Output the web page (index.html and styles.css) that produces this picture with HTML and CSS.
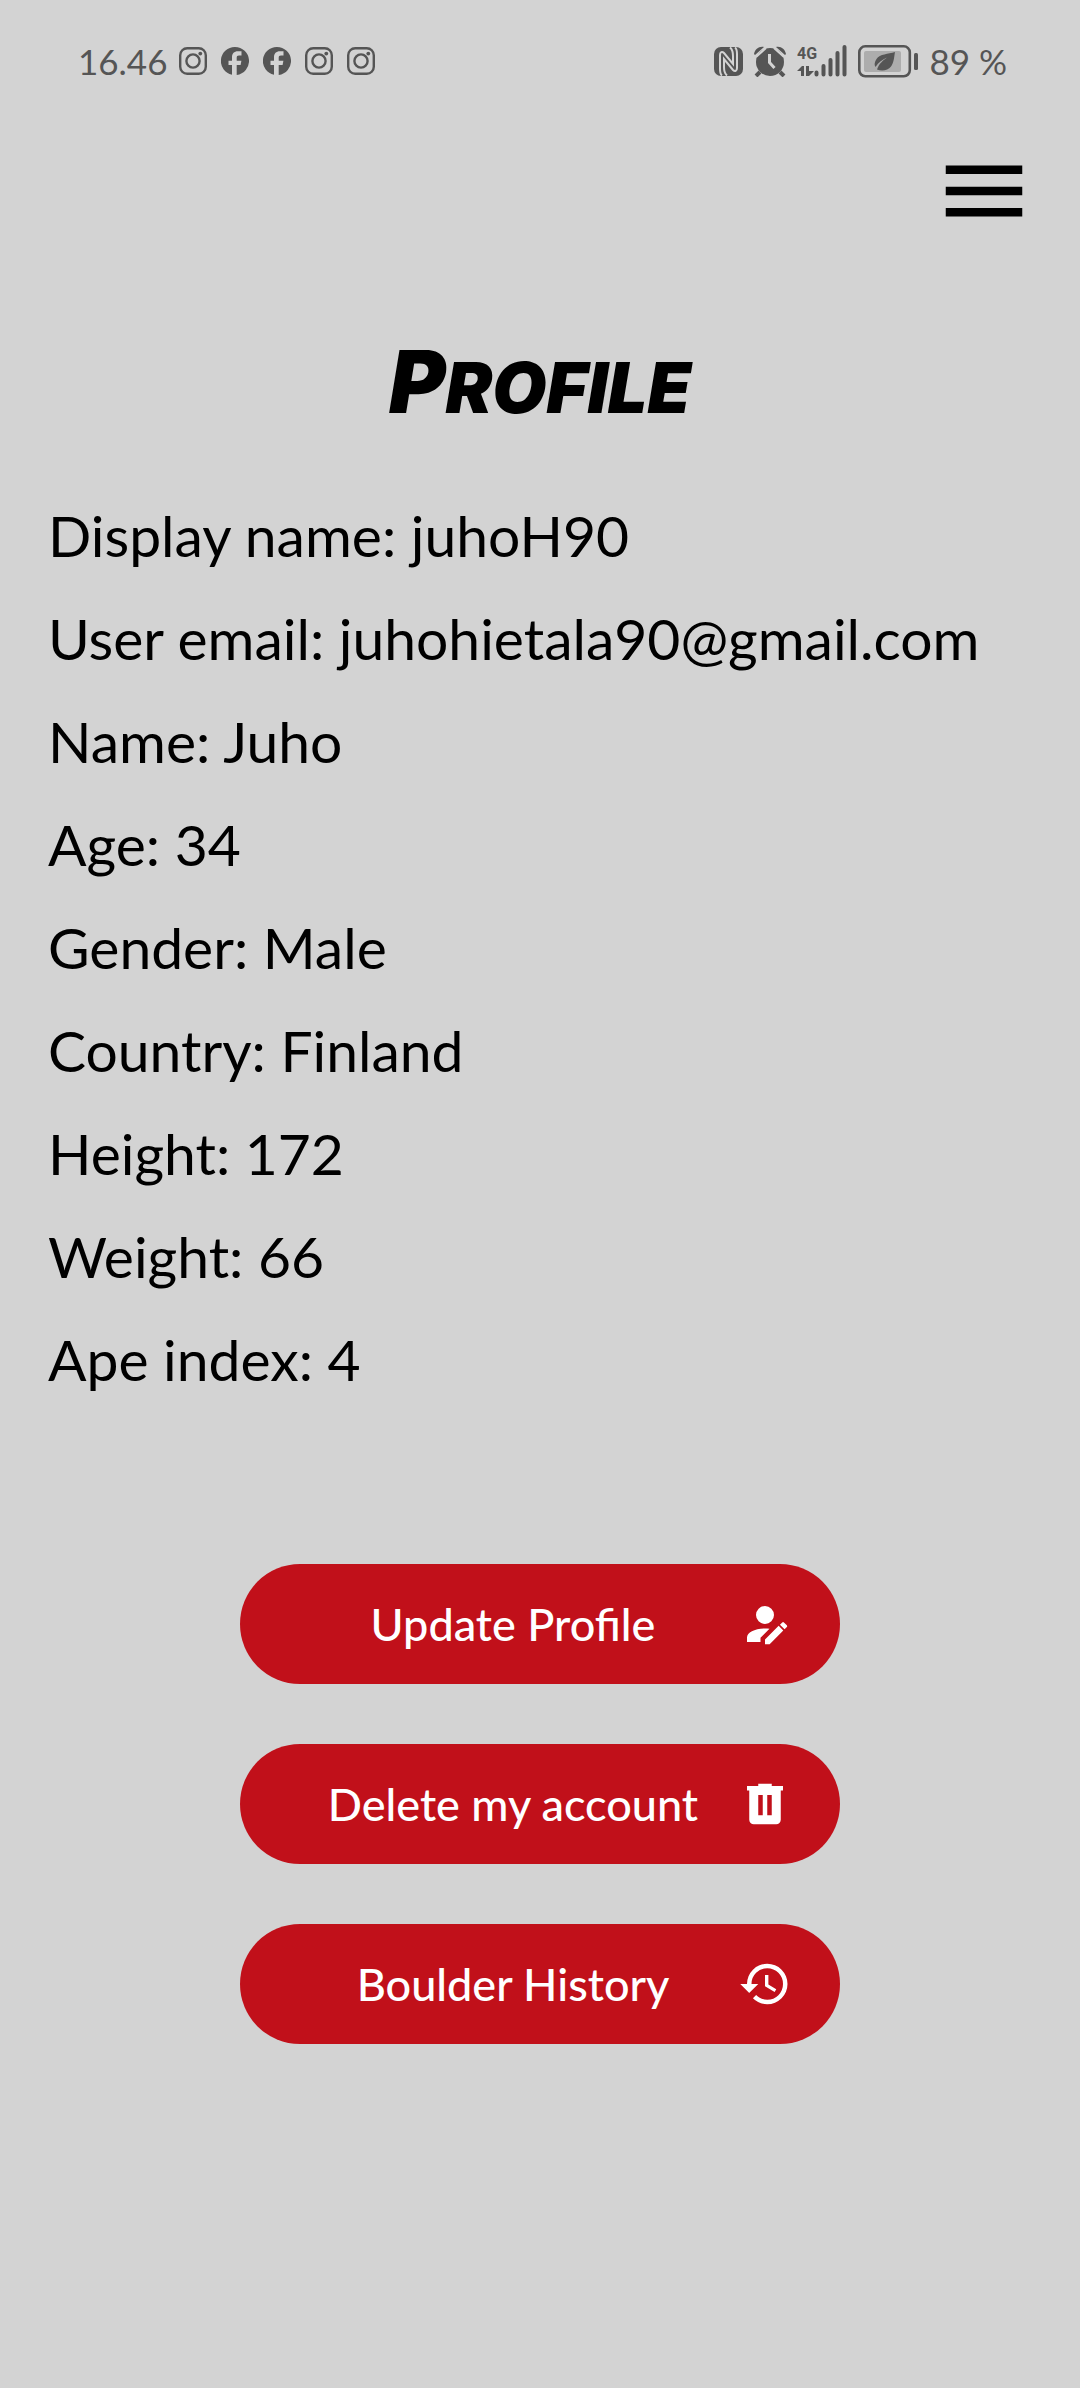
FILE: index.html
```html
<!DOCTYPE html>
<html lang="en">
<head>
<meta charset="utf-8">
<meta name="viewport" content="width=device-width, initial-scale=1">
<title>Profile</title>
<link rel="stylesheet" href="styles.css">
</head>
<body>
<svg class="defs" aria-hidden="true">
  <symbol id="instagram" viewBox="0 0 28 28">
    <rect x="1.200" y="1.200" width="25.600" height="25.600" rx="7" fill="none" stroke="currentColor" stroke-width="2.400"/>
    <circle cx="14" cy="14" r="6.600" fill="none" stroke="currentColor" stroke-width="2.400"/>
    <circle cx="21.300" cy="6.600" r="1.900" fill="currentColor"/>
  </symbol>
  <symbol id="facebook" viewBox="0 0 28 28">
    <path fill="currentColor" d="M14 0a14 14 0 0 0-3 27.700V18H7.500v-4.300H11v-3.200C11 6.500 13.200 4.300 16.800 4.300h3.700v4.100h-2.500c-1.700 0-2.300.9-2.300 2.300v3h4.700l-.8 4.300h-3.900v9.900A14 14 0 0 0 14 0z"/>
  </symbol>
</svg>

<header class="status">
  <div class="status-group">
    <time class="clock">16.46</time>
    <svg class="app"><use href="#instagram"/></svg>
    <svg class="app"><use href="#facebook"/></svg>
    <svg class="app"><use href="#facebook"/></svg>
    <svg class="app"><use href="#instagram"/></svg>
    <svg class="app"><use href="#instagram"/></svg>
  </div>
  <div class="status-group status-right">
    <svg class="nfc" viewBox="0 0 29 29">
      <rect width="29" height="29" rx="7" fill="currentColor"/>
      <path class="cut" d="M8 28.500C6 27 6 25 6 22V8c0-3 2-4 4-2L19 17V9c0-3 0-6-3-8.500M21 .5C23 2 23 4 23 7v14c0 3-2 4-4 2L10 12v8c0 3 0 6 3 8.500"/>
    </svg>
    <svg class="alarm" viewBox="0 0 32 31">
      <circle cx="16" cy="16" r="14" fill="currentColor"/>
      <path d="M6 26l-4 4M26 26l4 4" fill="none" stroke="currentColor" stroke-width="4"/>
      <path d="M0 8C1 3 5 0 10 1L1 9zM32 8C31 3 27 0 22 1l9 8z" fill="currentColor"/>
      <path class="cut" d="M2 11L12 2M30 11L20 2"/>
      <path class="cut hands" d="M15.500 8v8.500l5 5.500"/>
    </svg>
    <svg class="signal" viewBox="0 0 50 32">
      <text x="0" y="14" class="network">4G</text>
      <path fill="currentColor" d="M0 26l5-5h2v10H4v-5zM9 21h3v5h5l-5 5H9z"/>
      <path d="M19.500 27.500v2M26.500 21v8.500M33.500 15v14.500M40.500 8v21.500M47.500 2v27.500" fill="none" stroke="currentColor" stroke-width="4" stroke-linecap="round"/>
    </svg>
    <svg class="battery" viewBox="0 0 60 33">
      <rect x="1.300" y="1.300" width="50.500" height="30" rx="6" fill="none" stroke="currentColor" stroke-width="2.600"/>
      <rect x="6" y="6" width="37" height="21" rx="2" fill="#adadad"/>
      <rect x="56" y="8" width="4" height="17" rx="1.500" fill="currentColor"/>
      <path fill="currentColor" d="M37 7c-7 2-15 2-18.500 7-2 3-2.500 6-1 8 3-5 7-7.500 11.500-9.500-4 3-8 6-10 12 5 2 11 1 14-3 3-4 3-9 4-14.500z"/>
    </svg>
    <span class="charge">89 %</span>
  </div>
</header>

<nav class="topbar">
  <button class="menu" type="button" aria-label="Menu">
    <svg viewBox="0 0 24 24"><path fill="currentColor" d="M3 18h18v-2H3zM3 13h18v-2H3zM3 6v2h18V6z"/></svg>
  </button>
</nav>

<main>
  <h1>Profile</h1>
  <div class="details">
    <p>Display name: juhoH90</p>
    <p>User email: juhohietala90@gmail.com</p>
    <p>Name: Juho</p>
    <p>Age: 34</p>
    <p>Gender: Male</p>
    <p>Country: Finland</p>
    <p>Height: 172</p>
    <p>Weight: 66</p>
    <p>Ape index: 4</p>
  </div>
  <div class="actions">
    <button class="action" type="button">
      <span>Update Profile</span>
      <svg viewBox="0 0 24 24"><path d="M21.700 13.350l-1 1-2.050-2.050 1-1a.55.55 0 0 1 .77 0l1.280 1.280c.21.21.21.56 0 .77zM12 18.940V21h2.060l6.060-6.120-2.050-2.050zM12 14c-4.420 0-8 1.790-8 4v2h6v-1.890l4-4c-.66-.08-1.330-.11-2-.11zM12 4a4 4 0 1 0 0 8 4 4 0 0 0 0-8z"/></svg>
    </button>
    <button class="action" type="button">
      <span>Delete my account</span>
      <svg viewBox="0 0 24 24"><path fill-rule="evenodd" d="M9 3h6v1h5v2h-1v13a2 2 0 0 1-2 2H7a2 2 0 0 1-2-2V6H4V4h5zM9 8v9h2V8zM13 8v9h2V8z"/></svg>
    </button>
    <button class="action" type="button">
      <span>Boulder History</span>
      <svg viewBox="0 0 24 24"><path d="M13 3a9 9 0 0 0-9 9H1l3.890 3.890.07.14L9 12H6a7 7 0 1 1 7 7c-1.930 0-3.680-.79-4.940-2.060l-1.420 1.420A8.950 8.950 0 0 0 13 21a9 9 0 0 0 0-18zm-1 5v5l4.280 2.540.72-1.210-3.500-2.080V8z"/></svg>
    </button>
  </div>
</main>
</body>
</html>
```
FILE: styles.css
```css
* {
  box-sizing: border-box;
}

body {
  margin: 0;
  min-height: 100vh;
  background: #d3d3d3;
  color: #000;
  font-family: Lato, "Noto Sans", sans-serif;
}

svg {
  display: block;
  flex: none;
}

.defs {
  position: absolute;
  width: 0;
  height: 0;
}

.status {
  display: flex;
  justify-content: space-between;
  align-items: center;
  height: 122px;
  padding: 0 73px 0 78px;
  color: #555;
  font-size: 35px;
}

.status-group {
  display: flex;
  align-items: center;
  gap: 14px;
}

.clock {
  margin-right: -2px;
}

.status-right {
  gap: 11px;
}

.app {
  width: 28px;
  height: 28px;
}

.nfc {
  width: 29px;
  height: 29px;
}

.alarm {
  width: 32px;
  height: 31px;
}

.signal {
  width: 50px;
  height: 32px;
}

.battery {
  width: 60px;
  height: 33px;
}

.cut {
  fill: none;
  stroke: #d3d3d3;
  stroke-width: 2;
}

.hands {
  stroke-width: 3;
}

.network {
  fill: currentColor;
  font: bold 16px Roboto, sans-serif;
}

.topbar {
  display: flex;
  justify-content: flex-end;
  padding: 18px 45px 0;
}

.menu {
  width: 102px;
  height: 102px;
  padding: 0;
  border: 0;
  background: none;
  color: #000;
}

h1 {
  margin: 90px 0 0;
  font-family: Inter, Lato, sans-serif;
  font-size: 70px;
  font-weight: 900;
  font-style: italic;
  line-height: 112px;
  text-align: center;
  text-transform: uppercase;
}

h1::first-letter {
  font-size: 86px;
  line-height: 86px;
}

.details {
  margin-top: 40px;
  padding: 0 48px;
}

.details p {
  margin: 0;
  font-size: 57px;
  line-height: 103px;
}

.actions {
  display: flex;
  flex-direction: column;
  align-items: center;
  gap: 60px;
  margin: 153px 0 60px;
}

.action {
  display: flex;
  align-items: center;
  width: 600px;
  max-width: 100%;
  height: 120px;
  padding: 0 48px;
  border: 0;
  border-radius: 60px;
  background: #c1101a;
  color: #fff;
  font: 500 45px Lato, "Noto Sans", sans-serif;
}

.action span {
  flex: 1;
}

.action svg {
  width: 54px;
  height: 54px;
  fill: currentColor;
}
```
